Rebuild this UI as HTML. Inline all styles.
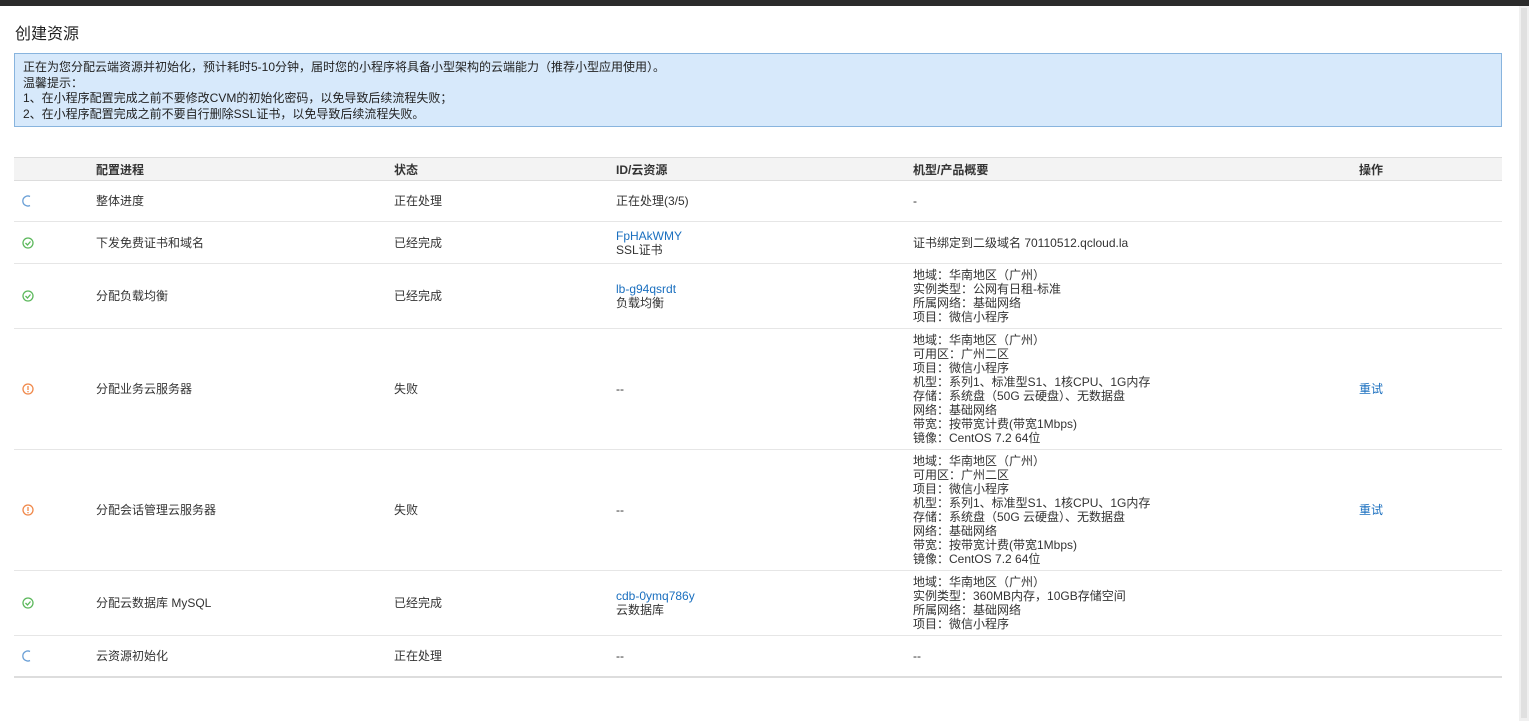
<!DOCTYPE html>
<html><head><meta charset="utf-8"><style>
*{margin:0;padding:0;box-sizing:border-box}
body{width:1529px;height:721px;background:#fff;font-family:"Liberation Sans","Noto Sans CJK SC",sans-serif;font-size:12px;color:#333;position:relative;overflow:hidden}
.top{position:absolute;left:0;top:0;width:1529px;height:6px;background:#2b2b2b}
.sb{position:absolute;left:1519px;top:6px;width:10px;height:715px;background:#f0f0f0}
.sb i{position:absolute;left:2px;top:2px;width:6px;height:710px;background:#e0e0e0}
h1{position:absolute;left:15px;top:20px;font-size:16px;font-weight:normal;color:#222}
.alert{position:absolute;left:14px;top:53px;width:1488px;height:74px;background:#d7e9fb;border:1px solid #88b4de;padding:6px 8px;line-height:15.5px;font-size:12px;color:#222}
table{position:absolute;left:14px;top:157px;width:1488px;border-collapse:collapse}
th{height:23px;background:#f3f3f3;text-align:left;font-weight:bold;color:#333;border-top:1px solid #ddd;border-bottom:1px solid #ddd;font-size:12px}
td{border-bottom:1px solid #e6e6e6;vertical-align:middle;line-height:14px}
tr:last-child td{border-bottom:2px solid #ddd}
a{color:#1a6fbf;text-decoration:none}
.ic{width:82px;padding-left:8px}
svg{display:block}
</style></head><body>
<div class="top"></div><div class="sb"><i></i></div>
<h1>创建资源</h1>
<div class="alert">正在为您分配云端资源并初始化，预计耗时5-10分钟，届时您的小程序将具备小型架构的云端能力（推荐小型应用使用）。<br>温馨提示：<br>1、在小程序配置完成之前不要修改CVM的初始化密码，以免导致后续流程失败；<br>2、在小程序配置完成之前不要自行删除SSL证书，以免导致后续流程失败。</div>
<table>
<colgroup><col style="width:82px"><col style="width:298px"><col style="width:222px"><col style="width:297px"><col style="width:446px"><col></colgroup>
<tr><th></th><th>配置进程</th><th>状态</th><th>ID/云资源</th><th>机型/产品概要</th><th>操作</th></tr>
<tr style="height:41px"><td class="ic"><svg width="12" height="12"><path d="M8 1.5A5 5 0 1 0 8 10.5" fill="none" stroke="#6a9fd6" stroke-width="1.3"/></svg></td><td>整体进度</td><td>正在处理</td><td>正在处理(3/5)</td><td>-</td><td></td></tr>
<tr style="height:42px"><td class="ic"><svg width="12" height="12"><circle cx="6" cy="6" r="5" fill="none" stroke="#5cb85c" stroke-width="1.3"/><path d="M3.5 6l2 2 3-3.5" fill="none" stroke="#5cb85c" stroke-width="1.3"/></svg></td><td>下发免费证书和域名</td><td>已经完成</td><td><a>FpHAkWMY</a><br>SSL证书</td><td>证书绑定到二级域名 70110512.qcloud.la</td><td></td></tr>
<tr style="height:65px"><td class="ic"><svg width="12" height="12"><circle cx="6" cy="6" r="5" fill="none" stroke="#5cb85c" stroke-width="1.3"/><path d="M3.5 6l2 2 3-3.5" fill="none" stroke="#5cb85c" stroke-width="1.3"/></svg></td><td>分配负载均衡</td><td>已经完成</td><td><a>lb-g94qsrdt</a><br>负载均衡</td><td>地域：华南地区（广州）<br>实例类型：公网有日租-标准<br>所属网络：基础网络<br>项目：微信小程序</td><td></td></tr>
<tr style="height:121px"><td class="ic"><svg width="12" height="12"><circle cx="6" cy="6" r="5" fill="none" stroke="#f0884a" stroke-width="1.3"/><path d="M6 3v4M6 8v1.2" stroke="#f0884a" stroke-width="1.3"/></svg></td><td>分配业务云服务器</td><td>失败</td><td>--</td><td>地域：华南地区（广州）<br>可用区：广州二区<br>项目：微信小程序<br>机型：系列1、标准型S1、1核CPU、1G内存<br>存储：系统盘（50G 云硬盘）、无数据盘<br>网络：基础网络<br>带宽：按带宽计费(带宽1Mbps)<br>镜像：CentOS 7.2 64位</td><td><a>重试</a></td></tr>
<tr style="height:121px"><td class="ic"><svg width="12" height="12"><circle cx="6" cy="6" r="5" fill="none" stroke="#f0884a" stroke-width="1.3"/><path d="M6 3v4M6 8v1.2" stroke="#f0884a" stroke-width="1.3"/></svg></td><td>分配会话管理云服务器</td><td>失败</td><td>--</td><td>地域：华南地区（广州）<br>可用区：广州二区<br>项目：微信小程序<br>机型：系列1、标准型S1、1核CPU、1G内存<br>存储：系统盘（50G 云硬盘）、无数据盘<br>网络：基础网络<br>带宽：按带宽计费(带宽1Mbps)<br>镜像：CentOS 7.2 64位</td><td><a>重试</a></td></tr>
<tr style="height:65px"><td class="ic"><svg width="12" height="12"><circle cx="6" cy="6" r="5" fill="none" stroke="#5cb85c" stroke-width="1.3"/><path d="M3.5 6l2 2 3-3.5" fill="none" stroke="#5cb85c" stroke-width="1.3"/></svg></td><td>分配云数据库 MySQL</td><td>已经完成</td><td><a>cdb-0ymq786y</a><br>云数据库</td><td>地域：华南地区（广州）<br>实例类型：360MB内存，10GB存储空间<br>所属网络：基础网络<br>项目：微信小程序</td><td></td></tr>
<tr style="height:41px"><td class="ic"><svg width="12" height="12"><path d="M8 1.5A5 5 0 1 0 8 10.5" fill="none" stroke="#6a9fd6" stroke-width="1.3"/></svg></td><td>云资源初始化</td><td>正在处理</td><td>--</td><td>--</td><td></td></tr>
</table>
</body></html>
